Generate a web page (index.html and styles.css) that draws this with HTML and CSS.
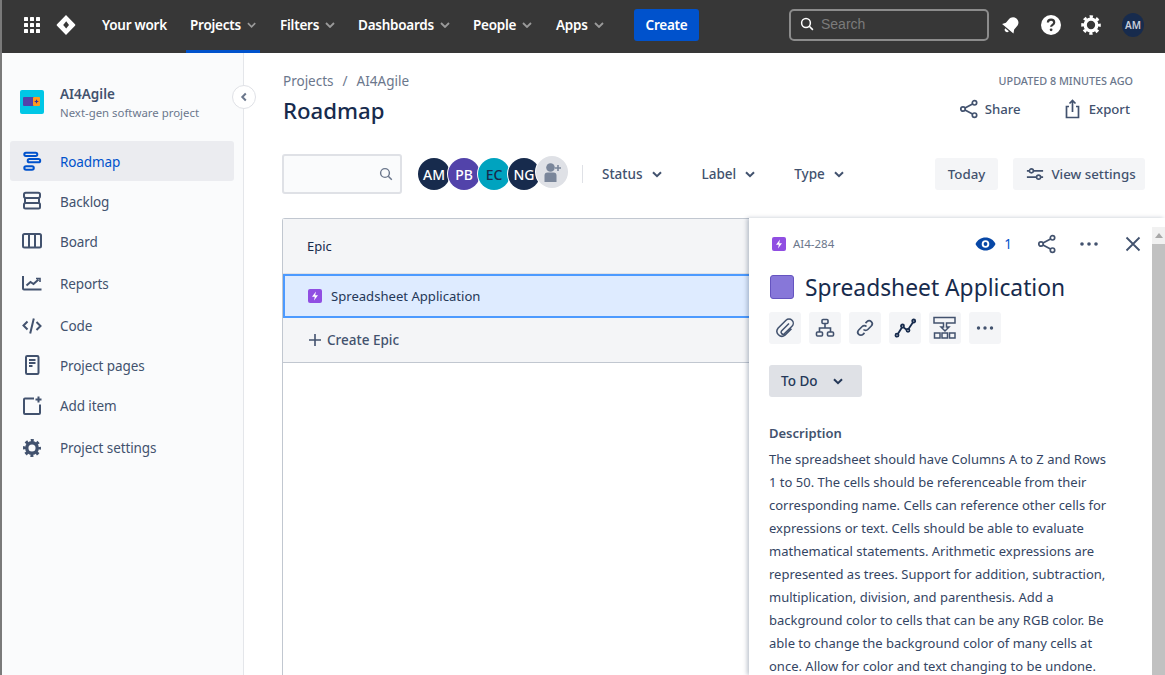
FILE: index.html
```html
<!DOCTYPE html>
<html lang="en">

<head>
    <meta charset="UTF-8">
    <title>Roadmap - AI4Agile</title>
    <link rel="stylesheet" href="styles.css">
</head>

<body>
    <header class="topbar">
        <svg class="apps-icon" width="18" height="18" viewBox="0 0 18 18" fill="#fff">
            <rect x="1" y="1" width="4" height="4" rx=".6"/><rect x="7" y="1" width="4" height="4" rx=".6"/><rect x="13" y="1" width="4" height="4" rx=".6"/>
            <rect x="1" y="7" width="4" height="4" rx=".6"/><rect x="7" y="7" width="4" height="4" rx=".6"/><rect x="13" y="7" width="4" height="4" rx=".6"/>
            <rect x="1" y="13" width="4" height="4" rx=".6"/><rect x="7" y="13" width="4" height="4" rx=".6"/><rect x="13" y="13" width="4" height="4" rx=".6"/>
        </svg>
        <svg class="logo" width="20" height="22" viewBox="0 0 20 22">
            <path d="M10 1l9 9.200a1.100 1.100 0 0 1 0 1.600L10 21l-9-9.200a1.100 1.100 0 0 1 0-1.600z" fill="#fff"/>
            <path d="M10.200 7.200l-3 3.800 3 3.600 2.800-3.600z" fill="#373737"/>
        </svg>
        <nav class="topnav">
            <a class="topnav-item nav-work">Your work</a>
            <a class="topnav-item nav-projects active">Projects <svg class="chev" width="10" height="6" viewBox="0 0 10 6"><path d="M1 1l4 4 4-4" fill="none" stroke="#9a9a9a" stroke-width="1.800"/></svg></a>
            <a class="topnav-item nav-filters">Filters <svg class="chev" width="10" height="6" viewBox="0 0 10 6"><path d="M1 1l4 4 4-4" fill="none" stroke="#9a9a9a" stroke-width="1.800"/></svg></a>
            <a class="topnav-item nav-dash">Dashboards <svg class="chev" width="10" height="6" viewBox="0 0 10 6"><path d="M1 1l4 4 4-4" fill="none" stroke="#9a9a9a" stroke-width="1.800"/></svg></a>
            <a class="topnav-item nav-people">People <svg class="chev" width="10" height="6" viewBox="0 0 10 6"><path d="M1 1l4 4 4-4" fill="none" stroke="#9a9a9a" stroke-width="1.800"/></svg></a>
            <a class="topnav-item nav-apps">Apps <svg class="chev" width="10" height="6" viewBox="0 0 10 6"><path d="M1 1l4 4 4-4" fill="none" stroke="#9a9a9a" stroke-width="1.800"/></svg></a>
        </nav>
        <button class="create-btn">Create</button>
        <div class="top-search">
            <svg width="14" height="14" viewBox="0 0 14 14"><circle cx="6" cy="6" r="4.400" fill="none" stroke="#fff" stroke-width="1.500"/><path d="M9.300 9.300l3.600 3.600" stroke="#fff" stroke-width="1.600"/></svg>
            <span>Search</span>
        </div>
        <div class="top-icons">
            <svg width="20" height="20" viewBox="0 0 20 20" fill="#fff"><g transform="rotate(40 10 10)"><path d="M10 1.500c-3.400 0-5.400 2.500-5.400 5.700v4.300L2.600 15h14.800l-2-3.500V7.200c0-3.200-2-5.700-5.400-5.700z"/><path d="M7.600 16.200a2.400 2.400 0 0 0 4.800 0z"/></g></svg>
            <svg width="22" height="22" viewBox="0 0 22 22"><circle cx="11" cy="11" r="10" fill="#fff"/><path d="M7.900 8.600c0-1.800 1.400-2.900 3.200-2.900s3.100 1.100 3.100 2.700c0 2.400-3.100 2.400-3.100 4.400" fill="none" stroke="#373737" stroke-width="2.200"/><circle cx="11.100" cy="15.800" r="1.400" fill="#373737"/></svg>
            <svg width="20" height="20" viewBox="0 0 24 24" fill="none" stroke="#fff"><circle cx="12" cy="12" r="7" stroke-width="4"/><circle cx="12" cy="12" r="10" stroke-width="3.500" stroke-dasharray="3.930 3.930" stroke-dashoffset="1.960"/></svg>
            <span class="top-avatar">AM</span>
        </div>
    </header>

    <div class="layout">
        <aside class="sidebar">
            <div class="project">
                <svg width="24" height="24" viewBox="0 0 24 24"><rect width="24" height="24" rx="2" fill="#00c7e6"/><rect x="3" y="7" width="13" height="9" rx="1" fill="#5243aa"/><rect x="13" y="7" width="7" height="9" rx="1" fill="#ff991f"/><path d="M16.500 9.700v3.600M14.700 11.500h3.600" stroke="#403294" stroke-width="1.100"/></svg>
                <div class="project-text">
                    <div class="project-name">AI4Agile</div>
                    <div class="project-type">Next-gen software project</div>
                </div>
            </div>
            <ul class="sidenav">
                <li class="side-item selected">
                    <svg width="24" height="24" viewBox="0 0 24 24" fill="none" stroke="#0052cc" stroke-width="2"><rect x="4.300" y="2.700" width="13" height="3.300" rx="1.650"/><rect x="7.700" y="9" width="12.500" height="3.300" rx="1.650"/><rect x="4.300" y="16.200" width="9.500" height="3.600" rx="1.800"/></svg>
                    Roadmap
                </li>
                <li class="side-item">
                    <svg width="24" height="24" viewBox="0 0 24 24" fill="none" stroke="#42526e" stroke-width="2"><rect x="4" y="2.800" width="16" height="5.200" rx="1.800"/><path d="M5 8v5.200M19 8v5.200"/><path d="M4 8h16"/><rect x="4" y="13" width="16" height="5.500" rx="1.500"/></svg>
                    Backlog
                </li>
                <li class="side-item">
                    <svg width="24" height="24" viewBox="0 0 24 24" fill="none" stroke="#42526e" stroke-width="2"><rect x="3" y="4" width="18" height="13.500" rx="1.500"/><path d="M9 4v13.500M15 4v13.500"/></svg>
                    Board
                </li>
                <li class="side-item wide">
                    <svg width="24" height="24" viewBox="0 0 24 24" fill="none" stroke="#42526e" stroke-width="2"><path d="M3 4v12.500a1 1 0 0 0 1 1h17.500"/><path d="M6.500 13.500l4-3.500 3 2 5-4.500"/><path d="M16 6.500h4V10" stroke-width="1.600"/></svg>
                    Reports
                </li>
                <li class="side-item wide">
                    <svg width="24" height="24" viewBox="0 0 24 24" fill="none" stroke="#42526e" stroke-width="2"><path d="M7.500 7.500L3.500 11.500l4 4M16.500 8l4 4-4 4M13.800 4.500l-3.600 15"/></svg>
                    Code
                </li>
                <li class="side-item">
                    <svg width="24" height="24" viewBox="0 0 24 24" fill="none" stroke="#42526e" stroke-width="2"><rect x="6" y="2" width="12.500" height="18" rx="1.200"/><path d="M9 6h6.500M9 9h6.500M9 12h3.500"/></svg>
                    Project pages
                </li>
                <li class="side-item">
                    <svg width="24" height="24" viewBox="0 0 24 24" fill="none" stroke="#42526e" stroke-width="2"><path d="M14 4.500H5a1 1 0 0 0-1 1V19a1 1 0 0 0 1 1h14a1 1 0 0 0 1-1v-8.500"/><path d="M18.500 2.500v6M15.500 5.500h6"/></svg>
                    Add item
                </li>
                <li class="side-item wide">
                    <svg width="24" height="24" viewBox="-4 -4 32 32" fill="none" stroke="#42526e"><circle cx="12" cy="12" r="7" stroke-width="4.500"/><circle cx="12" cy="12" r="10" stroke-width="4" stroke-dasharray="3.930 3.930" stroke-dashoffset="1.960"/></svg>
                    Project settings
                </li>
            </ul>
            <button class="collapse-btn">
                <svg width="8" height="10" viewBox="0 0 8 10"><path d="M5.800 1.500L2.300 5l3.500 3.500" fill="none" stroke="#6b778c" stroke-width="2"/></svg>
            </button>
        </aside>

        <main class="content">
            <div class="page-head">
                <div>
                    <div class="crumbs"><span>Projects</span><span class="sep">/</span><span>AI4Agile</span></div>
                    <h1>Roadmap</h1>
                </div>
                <div class="head-right">
                    <div class="updated">UPDATED 8 MINUTES AGO</div>
                    <div class="head-actions">
                        <span class="head-action">
                            <svg width="20" height="20" viewBox="0 0 20 20" fill="none" stroke="#42526e" stroke-width="1.700"><circle cx="4" cy="10" r="2.200"/><circle cx="15.500" cy="3.800" r="2.200"/><circle cx="15.500" cy="16.200" r="2.200"/><path d="M6 9l7.500-4M6 11l7.500 4"/></svg>
                            Share
                        </span>
                        <span class="head-action">
                            <svg width="20" height="20" viewBox="0 0 20 20" fill="none" stroke="#42526e" stroke-width="1.700"><path d="M6 7.500H3.500v11h12v-11H13M9.500 13V1.800M6.500 4.500l3-3 3 3"/></svg>
                            Export
                        </span>
                    </div>
                </div>
            </div>

            <div class="toolbar">
                <div class="filter-search">
                    <svg width="14" height="14" viewBox="0 0 14 14"><circle cx="6" cy="6" r="4.400" fill="none" stroke="#6b778c" stroke-width="1.400"/><path d="M9.300 9.300l3.500 3.500" stroke="#6b778c" stroke-width="1.500"/></svg>
                </div>
                <div class="avatars">
                    <span class="avatar av-am">AM</span>
                    <span class="avatar av-pb">PB</span>
                    <span class="avatar av-ec">EC</span>
                    <span class="avatar av-ng">NG</span>
                    <span class="avatar av-add">
                        <svg width="22" height="22" viewBox="0 0 22 22" fill="#7a869a"><circle cx="9.500" cy="6.500" r="4.300"/><path d="M3.500 14.500a3 3 0 0 1 3-3h6a3 3 0 0 1 3 3V21h-12z"/><path d="M17 4v6M14 7h6" stroke="#7a869a" stroke-width="1.600"/></svg>
                    </span>
                </div>
                <span class="divider"></span>
                <span class="filter f-status">Status <svg width="10" height="7" viewBox="0 0 10 7"><path d="M1 1.200l4 4 4-4" fill="none" stroke="#42526e" stroke-width="2"/></svg></span>
                <span class="filter f-label">Label <svg width="10" height="7" viewBox="0 0 10 7"><path d="M1 1.200l4 4 4-4" fill="none" stroke="#42526e" stroke-width="2"/></svg></span>
                <span class="filter f-type">Type <svg width="10" height="7" viewBox="0 0 10 7"><path d="M1 1.200l4 4 4-4" fill="none" stroke="#42526e" stroke-width="2"/></svg></span>
                <button class="tool-btn today">Today</button>
                <button class="tool-btn view">
                    <svg width="18" height="16" viewBox="0 0 20 16" fill="none" stroke="#42526e"><path d="M1 4.500h18M1 11.500h18" stroke-width="2"/><circle cx="6" cy="4.500" r="2.200" fill="#f4f5f7" stroke-width="1.800"/><circle cx="14" cy="11.500" r="2.200" fill="#f4f5f7" stroke-width="1.800"/></svg>
                    View settings
                </button>
            </div>

            <div class="roadmap">
                <div class="road-head">Epic</div>
                <div class="road-row">
                    <svg class="epic-icon" width="14" height="14" viewBox="0 0 14 14"><rect width="14" height="14" rx="2" fill="#904ee2"/><path d="M8 2.500L4 7.800h2.800L6 11.500l4-5.300H7.200z" fill="#fff"/></svg>
                    Spreadsheet Application
                </div>
                <div class="road-create">
                    <svg width="14" height="14" viewBox="0 0 14 14"><path d="M7 1v12M1 7h12" stroke="#42526e" stroke-width="1.600"/></svg>
                    Create Epic
                </div>
            </div>
        </main>
    </div>

    <section class="drawer">
        <div class="drawer-body">
            <div class="drawer-top">
                <span class="issue-key">
                    <svg width="14" height="14" viewBox="0 0 14 14"><rect width="14" height="14" rx="2" fill="#904ee2"/><path d="M8 2.500L4 7.800h2.800L6 11.500l4-5.300H7.200z" fill="#fff"/></svg>
                    AI4-284
                </span>
                <span class="watch">
                    <svg width="21" height="14" viewBox="0 0 21 14"><path d="M.5 7C2.500 2.800 6 .5 10.500.5S18.500 2.800 20.500 7c-2 4.200-5.500 6.500-10 6.500S2.500 11.200.5 7z" fill="#0747a6"/><circle cx="10.500" cy="7" r="3.800" fill="#fff"/><circle cx="10.500" cy="7" r="1.900" fill="#0747a6"/></svg>
                    1
                </span>
                <svg class="top-share" width="20" height="20" viewBox="0 0 20 20" fill="none" stroke="#42526e" stroke-width="1.700"><circle cx="4" cy="10" r="2.200"/><circle cx="15.500" cy="3.800" r="2.200"/><circle cx="15.500" cy="16.200" r="2.200"/><path d="M6 9l7.500-4M6 11l7.500 4"/></svg>
                <svg class="top-more" width="20" height="6" viewBox="0 0 20 6" fill="#42526e"><circle cx="3" cy="3" r="1.800"/><circle cx="10" cy="3" r="1.800"/><circle cx="17" cy="3" r="1.800"/></svg>
                <svg class="top-close" width="16" height="16" viewBox="0 0 16 16"><path d="M1.500 1.500l13 13M14.500 1.500l-13 13" stroke="#42526e" stroke-width="1.800"/></svg>
            </div>
            <div class="issue-title">
                <span class="swatch"></span>
                <h2>Spreadsheet Application</h2>
            </div>
            <div class="issue-tools">
                <span class="icon-btn"><svg width="22" height="22" viewBox="0 0 22 22" fill="none" stroke="#42526e" stroke-width="1.500"><path d="M15 6.500L7.500 14a2 2 0 0 0 2.800 2.800L18 9.200a4.200 4.200 0 0 0-6-6L4 11.200a5 5 0 0 0 7 7l6.500-6.500"/></svg></span>
                <span class="icon-btn"><svg width="20" height="20" viewBox="0 0 20 20" fill="none" stroke="#42526e" stroke-width="1.600"><rect x="7" y="1.500" width="6" height="4" rx="1"/><rect x="1.500" y="14" width="6" height="4" rx="1"/><rect x="12.500" y="14" width="6" height="4" rx="1"/><path d="M10 5.500v4.500M4.500 14v-4h11v4"/></svg></span>
                <span class="icon-btn"><svg width="20" height="20" viewBox="0 0 20 20" fill="none" stroke="#42526e" stroke-width="1.700"><path d="M8.500 11.500a3 3 0 0 0 4.300 0l3.500-3.500a3 3 0 0 0-4.300-4.300L10.500 5.200"/><path d="M11.500 8.500a3 3 0 0 0-4.300 0l-3.500 3.500a3 3 0 0 0 4.300 4.300l1.500-1.500"/></svg></span>
                <span class="icon-btn"><svg width="24" height="24" viewBox="0 0 24 24" fill="none" stroke="#172b4d" stroke-width="1.800"><path d="M4.500 18.500l5-8 5 4 6-9"/><circle cx="4" cy="19.200" r="1.500" fill="#f4f5f7"/><circle cx="9.500" cy="10" r="1.500" fill="#f4f5f7"/><circle cx="15" cy="14.300" r="1.500" fill="#f4f5f7"/><circle cx="20.700" cy="5" r="1.500" fill="#f4f5f7"/></svg></span>
                <span class="icon-btn"><svg width="24" height="24" viewBox="0 0 24 24" fill="none" stroke="#42526e" stroke-width="1.500"><path d="M1 1.500h21v5.500h-8.500l0 4h2.500L12 15l-4-4h2.500V7H1z"/><rect x="1.500" y="17" width="5.500" height="5"/><rect x="9" y="17" width="5.500" height="5"/><rect x="16.500" y="17" width="5.500" height="5"/></svg></span>
                <span class="icon-btn"><svg width="18" height="6" viewBox="0 0 18 6" fill="#42526e"><circle cx="2.500" cy="3" r="1.700"/><circle cx="9" cy="3" r="1.700"/><circle cx="15.500" cy="3" r="1.700"/></svg></span>
            </div>
            <button class="status-btn">To Do <svg width="10" height="7" viewBox="0 0 10 7"><path d="M1 1.200l4 4 4-4" fill="none" stroke="#253858" stroke-width="2"/></svg></button>
            <h3>Description</h3>
            <p class="desc">The spreadsheet should have Columns A to Z and Rows 1 to 50. The cells should be referenceable from their corresponding name. Cells can reference other cells for expressions or text. Cells should be able to evaluate mathematical statements. Arithmetic expressions are represented as trees. Support for addition, subtraction, multiplication, division, and parenthesis. Add a background color to cells that can be any RGB color. Be able to change the background color of many cells at once. Allow for color and text changing to be undone.</p>
        </div>
        <div class="scrollbar">
            <div class="scroll-up"><svg width="8" height="5" viewBox="0 0 8 5"><path d="M4 0l4 5H0z" fill="#a8a8a8"/></svg></div>
            <div class="scroll-thumb"></div>
        </div>
    </section>
</body>

</html>
```

FILE: styles.css
```css
* {
    box-sizing: border-box;
}

html,
body {
    margin: 0;
    height: 100%;
    overflow: hidden;
}

body {
    font-family: "Noto Sans", Arial, sans-serif;
    font-size: 14px;
    color: #172b4d;
    background: #fff;
    border-left: 2px solid #7a7a7a;
    position: relative;
}

/* top bar */
.topbar {
    height: 53px;
    background: #373737;
    display: flex;
    align-items: center;
    color: #fff;
    margin-left: -2px;
    padding: 0 0 3px 23px;
}

.apps-icon {
    flex: none;
}

.logo {
    margin-left: 15px;
    flex: none;
}

.topnav {
    display: flex;
    align-self: stretch;
    margin: 0 0 -3px 22px;
}

.topnav-item {
    display: flex;
    align-items: center;
    gap: 6px;
    padding: 0 4px;
    border-bottom: 3px solid transparent;
    font-weight: 600;
    font-size: 13.5px;
    letter-spacing: -0.25px;
    white-space: nowrap;
}

.topnav-item.active {
    border-bottom-color: #0052cc;
}

.nav-work { width: 88px; }
.nav-projects { width: 74px; }
.nav-filters { width: 78px; margin-left: 16px; }
.nav-dash { width: 115px; }
.nav-people { width: 83px; }
.nav-apps { width: 60px; }

.create-btn {
    margin-left: 22px;
    width: 65px;
    height: 32px;
    background: #0052cc;
    border: 0;
    border-radius: 3px;
    color: #fff;
    font: 600 13.5px "Noto Sans", Arial, sans-serif;
    letter-spacing: -0.25px;
}

.top-search {
    margin-left: 90px;
    width: 200px;
    height: 32px;
    border: 2px solid #8c8c8c;
    border-radius: 5px;
    display: flex;
    align-items: center;
    gap: 7px;
    padding: 0 0 2px 9px;
    font-family: "Liberation Sans", Arial, sans-serif;
    font-size: 14px;
    color: #7b7b7b;
}

.top-icons {
    display: flex;
    align-items: center;
    margin-left: 12px;
    gap: 19px;
}

.top-avatar {
    width: 22px;
    height: 24px;
    border-radius: 50%;
    background: #172b4d;
    color: #c8cfdb;
    font-size: 10px;
    font-weight: 600;
    display: flex;
    align-items: center;
    justify-content: center;
    margin-left: 2px;
}

/* page layout */
.layout {
    display: flex;
    height: 622px;
}

.sidebar {
    width: 242px;
    flex: none;
    background: #fafbfc;
    border-right: 1px solid #e4e6ea;
    position: relative;
    padding: 0 9px 0 8px;
}

.project {
    display: flex;
    align-items: center;
    gap: 16px;
    padding: 9px 0 0 10px;
    height: 88px;
}

.project-text {
    padding-top: 4px;
}

.project-name {
    font-size: 13.5px;
    font-weight: 600;
    color: #42526e;
    line-height: 18px;
}

.project-type {
    margin-top: 1px;
    font-size: 11.4px;
    color: #6b778c;
    line-height: 18px;
}

.sidenav {
    list-style: none;
    margin: 0;
    padding: 0;
}

.side-item {
    height: 40px;
    display: flex;
    align-items: center;
    gap: 16px;
    padding: 2px 0 0 10px;
    border-radius: 3px;
    font-size: 13.5px;
    letter-spacing: -0.1px;
    color: #42526e;
}

.side-item.wide {
    margin-top: 2px;
}

.side-item.selected {
    background: #ebecf0;
    color: #0052cc;
}

.side-item svg {
    flex: none;
}

.collapse-btn {
    position: absolute;
    right: -13px;
    top: 32px;
    width: 24px;
    height: 24px;
    border-radius: 50%;
    background: #fff;
    border: 1px solid #dfe1e6;
    padding: 0;
    display: flex;
    align-items: center;
    justify-content: center;
}

/* main area */
.content {
    flex: 1;
    padding: 0 20px 0 39px;
    min-width: 0;
}

.page-head {
    display: flex;
    justify-content: space-between;
    height: 101px;
}

.crumbs {
    display: flex;
    gap: 9px;
    margin-top: 19px;
    font-size: 13.5px;
    line-height: 18px;
    color: #6b778c;
}

h1 {
    margin: 5px 0 0;
    font-size: 22.2px;
    font-weight: 500;
    line-height: 32px;
    color: #172b4d;
}

.head-right {
    display: flex;
    flex-direction: column;
    align-items: flex-end;
    padding-right: 12px;
}

.updated {
    margin-top: 21px;
    font-size: 10.8px;
    font-weight: 500;
    line-height: 14px;
    color: #6b778c;
}

.head-actions {
    display: flex;
    gap: 42px;
    margin-top: 11px;
    margin-right: 3px;
}

.head-action {
    display: flex;
    align-items: center;
    gap: 6px;
    font-size: 13.2px;
    font-weight: 500;
    color: #42526e;
}

.toolbar {
    display: flex;
    align-items: center;
    height: 40px;
}

.filter-search {
    width: 120px;
    height: 40px;
    margin-left: -1px;
    border: 2px solid #dfe1e6;
    border-radius: 3px;
    background: #fafbfc;
    display: flex;
    align-items: center;
    justify-content: flex-end;
    padding-right: 7px;
}

.avatars {
    display: flex;
    margin-left: 16px;
}

.avatar {
    width: 32px;
    height: 32px;
    border-radius: 50%;
    display: flex;
    align-items: center;
    justify-content: center;
    margin-right: -2px;
    box-shadow: 0 0 0 1px #fff;
    font-size: 14px;
    font-weight: 500;
    color: #fff;
}

.av-am { background: #172b4d; }
.av-pb { background: #5243aa; }
.av-ec { background: #00a3bf; color: #172b4d; }
.av-ng { background: #172b4d; }

.av-add {
    background: #dfe1e6;
    margin: -2px 0 0 -2px;
}

.divider {
    width: 1px;
    height: 18px;
    background: #dfe1e6;
    margin-left: 14px;
}

.filter {
    display: flex;
    align-items: center;
    gap: 9px;
    font-size: 13.5px;
    font-weight: 500;
    color: #42526e;
}

.f-status { margin-left: 19px; }
.f-label { margin-left: 40px; }
.f-type { margin-left: 39px; }

.tool-btn {
    height: 32px;
    border: 0;
    border-radius: 3px;
    background: #f4f5f7;
    color: #42526e;
    font: 500 13.3px "Noto Sans", Arial, sans-serif;
    display: flex;
    align-items: center;
    justify-content: center;
    gap: 7px;
    padding: 0;
}

.today {
    width: 63px;
    margin-left: auto;
}

.view {
    width: 132px;
    margin-left: 15px;
    padding-left: 4px;
}

/* roadmap table */
.roadmap {
    margin: 24px -40px 0 -1px;
    height: 457px;
    border-top: 1px solid #c1c7d0;
    border-left: 1px solid #c1c7d0;
    border-radius: 3px 0 0 0;
}

.road-head {
    height: 55px;
    background: #f4f5f7;
    padding: 0 0 0 24px;
    display: flex;
    align-items: center;
    font-size: 13px;
    border-bottom: 1px solid #dfe1e6;
}

.road-row {
    height: 44px;
    background: #deebff;
    border: 2px solid #4c9aff;
    display: flex;
    align-items: center;
    gap: 9px;
    padding-left: 23px;
    font-size: 13.1px;
    color: #253858;
}

.road-create {
    height: 45px;
    background: #f4f5f7;
    border-bottom: 1px solid #c1c7d0;
    display: flex;
    align-items: center;
    gap: 5px;
    padding-left: 25px;
    font-size: 13.5px;
    font-weight: 500;
    color: #42526e;
}

/* issue panel, lies over the table */
.drawer {
    position: absolute;
    left: 747px;
    top: 218px;
    right: 0;
    bottom: 0;
    background: #fff;
    box-shadow: -2px 0 4px rgba(9, 30, 66, 0.25);
    overflow: hidden;
    display: flex;
}

.drawer-body {
    flex: 1;
    padding-left: 20px;
    min-width: 0;
}

.drawer-top {
    display: flex;
    align-items: center;
    height: 51px;
    padding-right: 11px;
}

.issue-key {
    display: flex;
    align-items: center;
    gap: 7px;
    margin-left: 3px;
    font-size: 11.5px;
    color: #6b778c;
}

.watch {
    display: flex;
    align-items: center;
    gap: 8px;
    margin-left: auto;
    font-size: 13.5px;
    color: #0052cc;
}

.top-share { margin-left: 25px; }
.top-more { margin-left: 22px; }
.top-close { margin-left: 26px; }

.issue-title {
    display: flex;
    align-items: center;
    gap: 11px;
    height: 36px;
    padding-left: 1px;
}

.swatch {
    width: 24px;
    height: 24px;
    border-radius: 3px;
    background: #8777d9;
    border: 1px solid #6554c0;
    flex: none;
}

h2 {
    margin: 0;
    font-size: 22.8px;
    font-weight: 400;
    color: #172b4d;
    white-space: nowrap;
}

.issue-tools {
    display: flex;
    gap: 8px;
    margin-top: 7px;
}

.icon-btn {
    width: 32px;
    height: 32px;
    border-radius: 3px;
    background: #f4f5f7;
    display: flex;
    align-items: center;
    justify-content: center;
}

.status-btn {
    margin-top: 21px;
    width: 93px;
    height: 32px;
    border: 0;
    border-radius: 3px;
    background: #dfe1e6;
    color: #253858;
    font: 500 13.5px "Noto Sans", Arial, sans-serif;
    display: flex;
    align-items: center;
    gap: 15px;
    padding: 0 0 0 12px;
}

h3 {
    margin: 26px 0 0;
    font-size: 13px;
    font-weight: 600;
    line-height: 20px;
    color: #42526e;
}

.desc {
    margin: 5px 0 0;
    width: 343px;
    font-size: 13px;
    line-height: 23px;
    color: #344563;
}

.scrollbar {
    width: 13px;
    flex: none;
    padding-top: 9px;
    display: flex;
    flex-direction: column;
}

.scroll-up {
    height: 17px;
    background: #f1f1f1;
    display: flex;
    align-items: center;
    justify-content: center;
}

.scroll-thumb {
    flex: 1;
    background: #c1c1c1;
}
```
